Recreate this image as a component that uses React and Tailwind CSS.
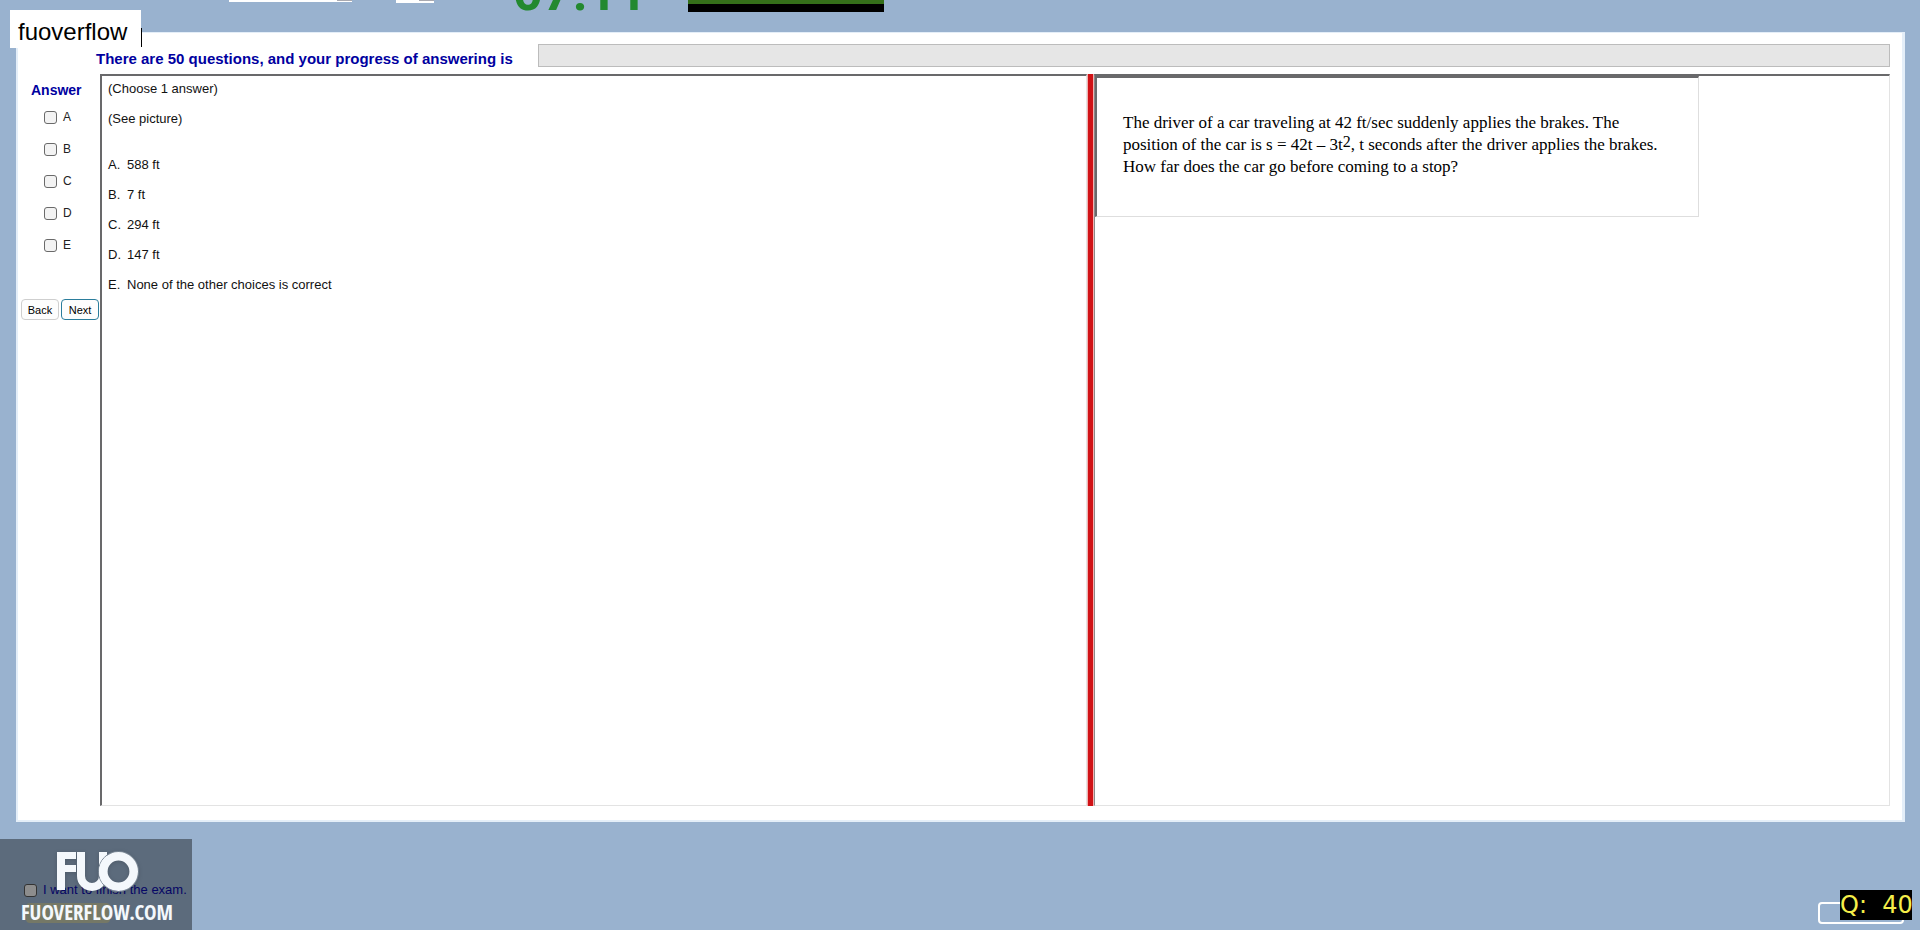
const choices = ['A', 'B', 'C', 'D', 'E'];

const answers = [
  ['A.', '588 ft'],
  ['B.', '7 ft'],
  ['C.', '294 ft'],
  ['D.', '147 ft'],
  ['E.', 'None of the other choices is correct'],
];

function TopStrip() {
  return (
    <header className="flex h-8 items-start overflow-hidden pl-[229px]">
      <div className="flex h-[2px] w-[123px] justify-end bg-white">
        <div className="h-px w-[15px] bg-[#a9a9b0]" />
      </div>
      <div className="ml-11 flex h-[3px] w-[38px] justify-end bg-white">
        <div className="h-px w-[15px] bg-[#a9a9b0]" />
      </div>
      <div className="ml-[79px] flex h-[11px] w-[175px] items-end overflow-hidden">
        <time
          className="block text-[52px] leading-[36px] font-bold text-[#23892f]"
          style={{ fontFamily: 'Roboto, "Liberation Sans", sans-serif' }}
        >
          07:11
        </time>
      </div>
      <div className="h-3 w-[196px] border-b-8 border-black bg-[#35701a]" />
    </header>
  );
}

function AnswerPanel() {
  return (
    <aside className="flex w-[82px] shrink-0 flex-col">
      <h2 className="pt-2 pl-[13px] text-[14px] leading-4 font-bold text-[#0000a0]">Answer</h2>
      <div className="mt-[11px] flex flex-col gap-4 pl-[26px]">
        {choices.map((c) => (
          <label key={c} className="flex h-4 items-center gap-[6px] text-[12px] leading-4 text-[#222]">
            <input
              type="checkbox"
              className="size-[13px] appearance-none rounded-[3px] border border-[#6a6a6a] bg-[#f3f3f3]"
            />
            {c}
          </label>
        ))}
      </div>
      <div className="mt-[46px] flex gap-[2px] pl-[3px] text-[11px] leading-4">
        <button className="h-[21px] w-[38px] rounded-[4px] border border-[#cfcfcf] bg-[#fdfdfd] text-black">Back</button>
        <button className="h-[21px] w-[38px] rounded-[4px] border border-[#2b7d9c] bg-[#fdfdfd] text-black">Next</button>
      </div>
    </aside>
  );
}

function QuestionPane() {
  return (
    <section className="flex-1 basis-[987px] border-t-2 border-r border-b border-l-2 border-t-[#69696b] border-r-[#e3e3e3] border-b-[#e3e3e3] border-l-[#69696b] pt-[5px] pl-[6px] text-[13px] leading-4 text-[#111]">
      <p>(Choose 1 answer)</p>
      <p className="mt-[14px]">(See picture)</p>
      <ul className="mt-[30px] flex flex-col gap-[14px]">
        {answers.map(([k, t]) => (
          <li key={k} className="flex">
            <span className="w-[19px]">{k}</span>
            <span>{t}</span>
          </li>
        ))}
      </ul>
    </section>
  );
}

function PicturePane() {
  return (
    <section className="flex-1 basis-[796px] border-t-2 border-r border-b border-l border-t-[#69696b] border-r-[#e3e3e3] border-b-[#e3e3e3] border-l-[#8a8a8a]">
      <figure
        className="h-[141px] w-[604px] border-t-2 border-r border-b border-l-2 border-t-[#69696b] border-r-[#dedede] border-b-[#dedede] border-l-[#69696b] pt-[34px] pl-[26px] text-[17px] text-black"
        style={{ fontFamily: '"Palatino Linotype", "Liberation Serif", serif' }}
      >
        <p className="leading-[22px] whitespace-nowrap">
          The driver of a car traveling at 42 ft/sec suddenly applies the brakes. The
          <br />
          position of the car is s = 42t – 3t
          <span className="align-[3px] text-[16px] leading-none">2</span>, t seconds after the driver applies the brakes.
          <br />
          How far does the car go before coming to a stop?
        </p>
      </figure>
    </section>
  );
}

function Monogram() {
  return (
    <svg
      role="img"
      aria-label="FUO"
      width="84"
      height="42"
      viewBox="0 0 84 42"
      className="absolute top-3 left-14 drop-shadow-sm"
    >
      <defs>
        <clipPath id="cup">
          <rect x="18" y="1" width="40" height="40" />
        </clipPath>
      </defs>
      <g fill="#f4f8fc">
        <rect x="1" y="1" width="8" height="38" />
        <rect x="1" y="1" width="19" height="7" />
        <rect x="1" y="14" width="19" height="7" />
      </g>
      <rect x="25" y="-30" width="22" height="66" rx="11" fill="none" stroke="#f4f8fc" strokeWidth="8" clipPath="url(#cup)" />
      <circle cx="62.5" cy="20.5" r="20" fill="none" stroke="#7b8896" strokeWidth="1" />
      <circle cx="62.5" cy="20.5" r="15.2" fill="none" stroke="#f4f8fc" strokeWidth="8.6" />
    </svg>
  );
}

export default function App() {
  return (
    <div
      className="relative flex min-h-screen flex-col bg-[#99b2cf]"
      style={{ fontFamily: '"Liberation Sans", Arial, sans-serif' }}
    >
      <TopStrip />

      <main className="mr-[15px] ml-4 flex flex-1 flex-col border-t border-r-[3px] border-b-2 border-l-2 border-[#e4eef8] bg-white pr-3 pb-[14px]">
        <div className="flex h-[41px] items-start pt-[11px] pl-[78px]">
          <label
            htmlFor="progress"
            className="w-[442px] shrink-0 pt-[5px] text-[15px] leading-5 font-bold whitespace-nowrap text-[#0000a0]"
          >
            There are 50 questions, and your progress of answering is
          </label>
          <div
            id="progress"
            role="progressbar"
            aria-valuenow={0}
            className="h-[23px] flex-1 border border-[#bcbcbc] bg-[#e6e6e6]"
          />
        </div>
        <div className="flex flex-1">
          <AnswerPanel />
          <QuestionPane />
          <div className="w-[7px] shrink-0 border-x border-x-[#f3b0b0] bg-[#d01216]" />
          <PicturePane />
        </div>
      </main>

      <footer className="flex h-[108px] justify-between pt-[60px] pr-4 pl-6">
        <div>
          <label className="flex items-center gap-[6px] text-[13px] leading-4 text-[#0a0aa8]">
            <input type="checkbox" className="size-[13px] appearance-none rounded-[3px] border border-[#555] bg-[#ececec]" />
            I want to finish the exam.
          </label>
          <div className="mt-[5px] ml-[2px] h-5 w-[84px] rounded-[4px] bg-[#c3c8ab]" />
        </div>
        <button aria-label="Exit" className="mt-5 h-[22px] w-[86px] rounded-[4px] border-2 border-white" />
      </footer>

      <div className="absolute top-[10px] left-[10px] flex items-start">
        <span className="h-[38px] w-[131px] bg-white pl-2 text-[24px] leading-[44px] text-black">fuoverflow</span>
        <span className="mt-[18px] h-[19px] w-px bg-black" />
      </div>

      <div className="absolute bottom-0 left-0 h-[91px] w-48 bg-black/40">
        <Monogram />
        <span
          className="absolute top-[63px] left-[21px] text-[21px] leading-5 font-black whitespace-nowrap text-[#f4f8fc]"
          style={{ fontFamily: 'Impact, "Liberation Sans Narrow", "Open Sans Condensed", "Roboto Condensed", "Liberation Sans", sans-serif' }}
        >
          FUOVERFLOW.COM
        </span>
      </div>

      <div
        className="absolute right-2 bottom-[10px] h-[30px] w-[72px] bg-black text-center text-[24px] leading-[30px] whitespace-pre text-[#f5ee4a]"
        style={{ fontFamily: '"DejaVu Sans", sans-serif' }}
      >
        {'Q:\u00a0\u00a040'}
      </div>
    </div>
  );
}
